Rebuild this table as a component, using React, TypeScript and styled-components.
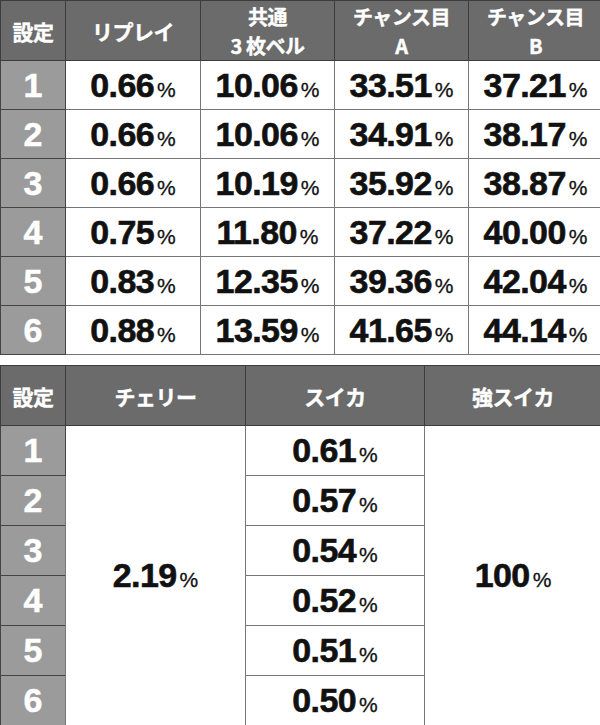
import styled, { createGlobalStyle } from "styled-components";

const GlobalStyle = createGlobalStyle`
  html, body {
    margin: 0;
    padding: 0;
    background: #ffffff;
  }
`;

const Page = styled.div`
  width: 600px;
  display: flex;
  flex-direction: column;
  gap: 10px;
  font-family: "Liberation Sans", "Noto Sans CJK JP", Arial, sans-serif;
`;

const Table = styled.table`
  border-collapse: collapse;
  table-layout: fixed;
  width: 597px;
`;

const HeadCell = styled.th<{ $w?: number }>`
  width: ${(p) => (p.$w ? `${p.$w}px` : "auto")};
  height: 59px;
  padding: 0;
  background: #6b6b6b;
  border: 1px solid #3c3c3c;
  color: #ffffff;
  font-family: "Noto Sans CJK JP", "Liberation Sans", sans-serif;
  font-weight: 700;
  font-size: 21px;
  text-align: center;
  vertical-align: middle;
  letter-spacing: -0.5px;
  -webkit-text-stroke: 0.4px #ffffff;
`;

const HeadLine = styled.span`
  display: block;
  font-size: 20px;
  line-height: 29px;
`;

const SetCell = styled.td<{ $h: number }>`
  height: ${(p) => p.$h}px;
  padding: 0;
  background: #9b9b9b;
  border: 1px solid #444444;
  color: #ffffff;
  font-weight: 700;
  font-size: 34px;
  text-align: center;
  vertical-align: middle;
  -webkit-text-stroke: 0.5px #ffffff;
`;

const ValueCell = styled.td`
  padding: 0;
  background: #ffffff;
  border: 1px solid #777777;
  color: #111111;
  font-weight: 700;
  font-size: 34px;
  letter-spacing: -0.6px;
  text-align: center;
  vertical-align: middle;
  white-space: nowrap;
  -webkit-text-stroke: 0.6px #111111;
`;

const Pct = styled.span`
  font-size: 21px;
  font-weight: 400;
  margin-left: 3px;
  letter-spacing: 0;
  -webkit-text-stroke: 0.3px #111111;
`;

const rates = [
  ["0.66", "10.06", "33.51", "37.21"],
  ["0.66", "10.06", "34.91", "38.17"],
  ["0.66", "10.19", "35.92", "38.87"],
  ["0.75", "11.80", "37.22", "40.00"],
  ["0.83", "12.35", "39.36", "42.04"],
  ["0.88", "13.59", "41.65", "44.14"],
];

const suika = ["0.61", "0.57", "0.54", "0.52", "0.51", "0.50"];

function Value({ v }: { v: string }) {
  return (
    <>
      {v}
      <Pct>%</Pct>
    </>
  );
}

export default function App() {
  return (
    <Page>
      <GlobalStyle />
      <Table>
        <thead>
          <tr>
            <HeadCell $w={64}>設定</HeadCell>
            <HeadCell $w={134}>リプレイ</HeadCell>
            <HeadCell $w={133}>
              <HeadLine>共通</HeadLine>
              <HeadLine>3 枚ベル</HeadLine>
            </HeadCell>
            <HeadCell $w={133}>
              <HeadLine>チャンス目</HeadLine>
              <HeadLine>A</HeadLine>
            </HeadCell>
            <HeadCell $w={133}>
              <HeadLine>チャンス目</HeadLine>
              <HeadLine>B</HeadLine>
            </HeadCell>
          </tr>
        </thead>
        <tbody>
          {rates.map((row, i) => (
            <tr key={i}>
              <SetCell $h={48}>{i + 1}</SetCell>
              {row.map((v, j) => (
                <ValueCell key={j}>
                  <Value v={v} />
                </ValueCell>
              ))}
            </tr>
          ))}
        </tbody>
      </Table>

      <Table>
        <thead>
          <tr>
            <HeadCell $w={64}>設定</HeadCell>
            <HeadCell $w={179}>チェリー</HeadCell>
            <HeadCell $w={178}>スイカ</HeadCell>
            <HeadCell $w={176}>強スイカ</HeadCell>
          </tr>
        </thead>
        <tbody>
          {suika.map((v, i) => (
            <tr key={i}>
              <SetCell $h={49}>{i + 1}</SetCell>
              {i === 0 && (
                <ValueCell rowSpan={6}>
                  <Value v="2.19" />
                </ValueCell>
              )}
              <ValueCell>
                <Value v={v} />
              </ValueCell>
              {i === 0 && (
                <ValueCell rowSpan={6}>
                  <Value v="100" />
                </ValueCell>
              )}
            </tr>
          ))}
        </tbody>
      </Table>
    </Page>
  );
}
